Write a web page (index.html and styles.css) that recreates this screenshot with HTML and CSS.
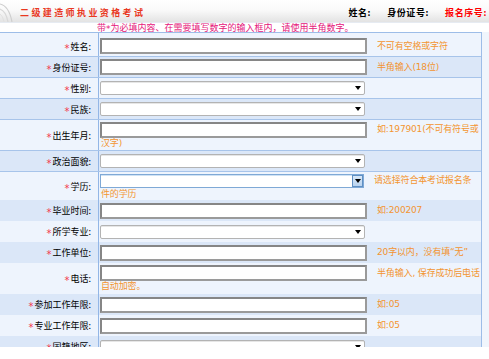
FILE: index.html
```html
<!DOCTYPE html>
<html lang="zh-CN">
<head>
<meta charset="utf-8">
<title>二级建造师执业资格考试</title>
<link rel="stylesheet" href="styles.css">
</head>
<body>
<div class="frame">
  <div class="header">
    <svg class="deco" width="20" height="23" viewBox="0 0 20 23">
      <path d="M0 5 Q9 7 12 23" fill="none" stroke="#cfcfcf" stroke-width="1.2"/>
      <path d="M0 10 Q6 12 8 23" fill="none" stroke="#d8d8d8" stroke-width="1.2"/>
      <path d="M0 15 Q3 17 4 23" fill="none" stroke="#e0e0e0" stroke-width="1"/>
    </svg>
    <div class="title">二级建造师执业资格考试</div>
    <div class="info">
      <span class="info-item">姓名:</span>
      <span class="info-item">身份证号:</span>
      <span class="info-item red">报名序号:</span>
    </div>
  </div>
  <div class="notice">带<span class="star">*</span>为必填内容、在需要填写数字的输入框内，请使用半角数字。</div>
  <div class="form">
    <div class="row light lined first">
      <div class="label"><span class="req">*</span>姓名:</div>
      <div class="field"><div class="line"><input class="input" type="text"><span class="hint">不可有空格或字符</span></div></div>
    </div>
    <div class="row dark lined">
      <div class="label"><span class="req">*</span>身份证号:</div>
      <div class="field"><div class="line"><input class="input" type="text"><span class="hint">半角输入(18位)</span></div></div>
    </div>
    <div class="row light lined">
      <div class="label"><span class="req">*</span>性别:</div>
      <div class="field"><div class="line"><span class="select"><span class="arrow"></span></span></div></div>
    </div>
    <div class="row dark lined">
      <div class="label"><span class="req">*</span>民族:</div>
      <div class="field"><div class="line"><span class="select"><span class="arrow"></span></span></div></div>
    </div>
    <div class="row light lined tall">
      <div class="label"><span class="req">*</span>出生年月:</div>
      <div class="field">
        <div class="line"><input class="input" type="text"><span class="hint">如:197901(不可有符号或</span></div>
        <div class="cont hint">汉字)</div>
      </div>
    </div>
    <div class="row dark lined">
      <div class="label"><span class="req">*</span>政治面貌:</div>
      <div class="field"><div class="line"><span class="select"><span class="arrow"></span></span></div></div>
    </div>
    <div class="row light mid">
      <div class="label"><span class="req">*</span>学历:</div>
      <div class="field">
        <div class="line"><span class="select focus"><span class="btn"><span class="arrow"></span></span></span><span class="hint">请选择符合本考试报名条</span></div>
        <div class="cont hint">件的学历</div>
      </div>
    </div>
    <div class="row dark">
      <div class="label"><span class="req">*</span>毕业时间:</div>
      <div class="field"><div class="line"><input class="input" type="text"><span class="hint">如:200207</span></div></div>
    </div>
    <div class="row light">
      <div class="label"><span class="req">*</span>所学专业:</div>
      <div class="field"><div class="line"><span class="select"><span class="arrow"></span></span></div></div>
    </div>
    <div class="row dark">
      <div class="label"><span class="req">*</span>工作单位:</div>
      <div class="field"><div class="line"><input class="input" type="text"><span class="hint">20字以内，没有填“无”</span></div></div>
    </div>
    <div class="row light tall">
      <div class="label"><span class="req">*</span>电话:</div>
      <div class="field">
        <div class="line"><input class="input" type="text"><span class="hint">半角输入, 保存成功后电话</span></div>
        <div class="cont hint">自动加密。</div>
      </div>
    </div>
    <div class="row dark">
      <div class="label"><span class="req">*</span>参加工作年限:</div>
      <div class="field"><div class="line"><input class="input" type="text"><span class="hint">如:05</span></div></div>
    </div>
    <div class="row light">
      <div class="label"><span class="req">*</span>专业工作年限:</div>
      <div class="field"><div class="line"><input class="input" type="text"><span class="hint">如:05</span></div></div>
    </div>
    <div class="row dark">
      <div class="label"><span class="req">*</span>国籍地区:</div>
      <div class="field"><div class="line"><span class="select"><span class="arrow"></span></span></div></div>
    </div>
  </div>
</div>
</body>
</html>
```

FILE: styles.css
```css
* {
  box-sizing: border-box;
}

body {
  margin: 0;
  background: #ffffff;
  font-family: "Noto Sans CJK SC", "Noto Sans", "DejaVu Sans", sans-serif;
  font-size: 9px;
  line-height: 11px;
  color: #000;
}

.frame {
  width: 489px;
  height: 347px;
  overflow: hidden;
  background: #f0f5fc;
  box-shadow: 0 2px 4px rgba(0, 0, 0, 0.28);
}

.header {
  height: 23px;
  display: flex;
  align-items: center;
  background: linear-gradient(#ffffff 0%, #fafafa 45%, #e3e3e3 100%);
  border-bottom: 1px solid #e6ebf2;
}

.deco {
  flex: none;
  align-self: flex-end;
}

.title {
  color: #e9381f;
  font-weight: bold;
  letter-spacing: 2.4px;
  padding-top: 2px;
}

.info {
  margin-left: auto;
  display: flex;
  gap: 16px;
  padding-top: 2px;
  padding-right: 2px;
  font-weight: bold;
  letter-spacing: 0.6px;
}

.info-item.red {
  color: #f00;
}

.notice {
  height: 9px;
  line-height: 10px;
  padding-left: 97px;
  background: #ffffff;
  color: #e5157a;
  white-space: nowrap;
}

.star {
  font-family: "DejaVu Sans", sans-serif;
  position: relative;
  top: 1px;
}

.form {
  width: 482px;
  border-top: 1px solid #9dbde8;
  border-right: 1px solid #9dbde8;
}

.row {
  display: flex;
  align-items: center;
  height: 21px;
}

.row.lined {
  border-bottom: 1px solid #a7c4ea;
}

.row.first {
  height: 24px;
  padding-top: 3px;
}

.row.tall {
  height: 31px;
}

.row.mid {
  height: 28px;
}

.light {
  background: #eef4fd;
}

.dark {
  background: #dbe7f8;
}

.label {
  flex: none;
  width: 99px;
  align-self: stretch;
  display: flex;
  align-items: center;
  justify-content: flex-end;
  padding-right: 7px;
  border-right: 1px solid #93b6e6;
  white-space: nowrap;
}

.row.first .label {
  margin-top: -3px;
  padding-top: 3px;
}

.req {
  font-family: "DejaVu Sans", sans-serif;
  font-size: 10px;
  color: #f2364d;
  position: relative;
  top: 2px;
  margin-right: 1px;
}

.field {
  flex: 1;
  padding-left: 1px;
}

.line {
  display: flex;
  align-items: center;
  height: 16px;
}

.input {
  display: block;
  width: 267px;
  height: 16px;
  margin: 0;
  padding: 0;
  border: 2px solid #868686;
  border-right-color: #9a9a9a;
  border-bottom-color: #9a9a9a;
  background: #fff;
  font: inherit;
}

.select {
  position: relative;
  display: block;
  width: 265px;
  height: 14px;
  border: 1px solid #b3b3b3;
  border-radius: 2px;
  background: #fff;
  box-shadow: inset 0 1px 0 #e6e6e6;
}

.select .arrow {
  position: absolute;
  right: 3px;
  top: 4px;
  width: 0;
  height: 0;
  border-left: 3.5px solid transparent;
  border-right: 3.5px solid transparent;
  border-top: 4px solid #000;
}

.select.focus {
  width: 264px;
  border-color: #7fa9d6;
  border-radius: 0;
  box-shadow: inset 0 1px 0 #cfe2f4;
}

.btn {
  position: absolute;
  right: 0;
  top: 0;
  width: 11px;
  height: 12px;
  border: 1px solid #5f8fc3;
  background: linear-gradient(#d8e8f8, #b9d3ef);
}

.btn .arrow {
  right: 1px;
  top: 3px;
}

.hint {
  font-family: "DejaVu Sans", "Noto Sans CJK SC", sans-serif;
  color: #f39430;
  white-space: nowrap;
  letter-spacing: -0.15px;
}

.line .hint {
  margin-left: 10px;
}

.cont {
  line-height: 11px;
  padding-left: 1px;
}
```
